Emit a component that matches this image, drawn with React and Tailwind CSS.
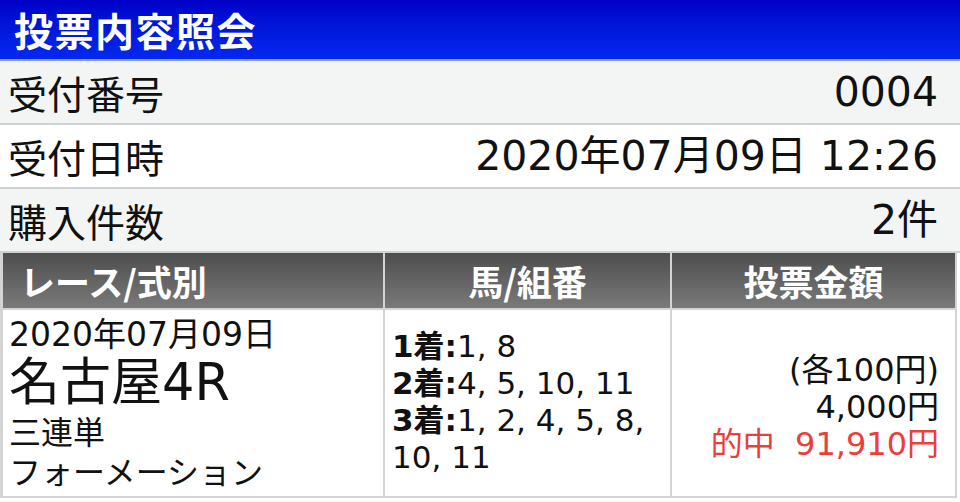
const font = { fontFamily: '"Noto Sans CJK JP", "Noto Sans", sans-serif' };
const wide = { fontFamily: '"DejaVu Sans", "Noto Sans CJK JP", sans-serif' };

const InfoRow = ({ label, value, bg }) => (
  <div
    className={`flex h-[64px] items-center justify-between border-b-2 border-[#cfd2d2] pl-[8px] pr-[22px] leading-none text-[#111] ${bg}`}
  >
    <span className="text-[39px]">{label}</span>
    <span className="text-[41px]" style={wide}>
      {value}
    </span>
  </div>
);

const headCell =
  "flex h-[57px] items-center border-b-2 border-[#d4d4d4] bg-gradient-to-b from-[#4e4e4e] to-[#7a7a7a] text-[35px] font-bold leading-none text-white";

export default function App() {
  return (
    <div className="h-[502px] w-[960px] overflow-hidden bg-white" style={font}>
      <div className="flex h-[61px] items-center border-b-2 border-[#8a9cf0] bg-gradient-to-b from-[#0000c8] to-[#0428f0] pl-[14px]">
        <span className="text-[39px] font-bold leading-none tracking-[1.5px] text-white">
          投票内容照会
        </span>
      </div>
      <InfoRow label="受付番号" value="0004" bg="bg-[#f3f5f5]" />
      <InfoRow label="受付日時" value="2020年07月09日 12:26" bg="bg-white" />
      <InfoRow label="購入件数" value="2件" bg="bg-[#f3f5f5]" />

      <div className="mr-[3px] grid grid-cols-[380px_287px_1fr] border-l-[3px] border-r-2 border-[#d4d4d4]">
        <div className={`${headCell} pl-[17px]`}>レース/式別</div>
        <div className={`${headCell} justify-center border-l-2`}>馬/組番</div>
        <div className={`${headCell} justify-center border-l-2`}>投票金額</div>

        <div
          className="flex h-[188px] flex-col whitespace-nowrap border-b-2 border-[#d4d4d4] pl-[6px] pt-[5px] text-[#111]"
          style={wide}
        >
          <span className="text-[33px] leading-[40px]">2020年07月09日</span>
          <span className="text-[51px] leading-[56px]">名古屋4R</span>
          <span className="text-[32px] leading-[44px]">三連単</span>
          <span className="text-[32px] leading-[36px]">フォーメーション</span>
        </div>
        <div
          className="flex h-[188px] flex-col whitespace-nowrap border-b-2 border-l-2 border-[#d4d4d4] pl-[7px] pt-[18px] text-[31px] leading-[37px] text-[#111]"
          style={wide}
        >
          <span>
            <b>1着:</b>1, 8
          </span>
          <span>
            <b>2着:</b>4, 5, 10, 11
          </span>
          <span>
            <b>3着:</b>1, 2, 4, 5, 8,
          </span>
          <span>10, 11</span>
        </div>
        <div
          className="flex h-[188px] flex-col items-end justify-center whitespace-nowrap border-b-2 border-l-2 border-[#d4d4d4] pr-[16px] pt-[8px] text-[32px] leading-[37px] text-[#111]"
          style={wide}
        >
          <span>(各100円)</span>
          <span>4,000円</span>
          <span className="text-[#e8403a]">的中&nbsp;&nbsp;91,910円</span>
        </div>
      </div>
    </div>
  );
}
